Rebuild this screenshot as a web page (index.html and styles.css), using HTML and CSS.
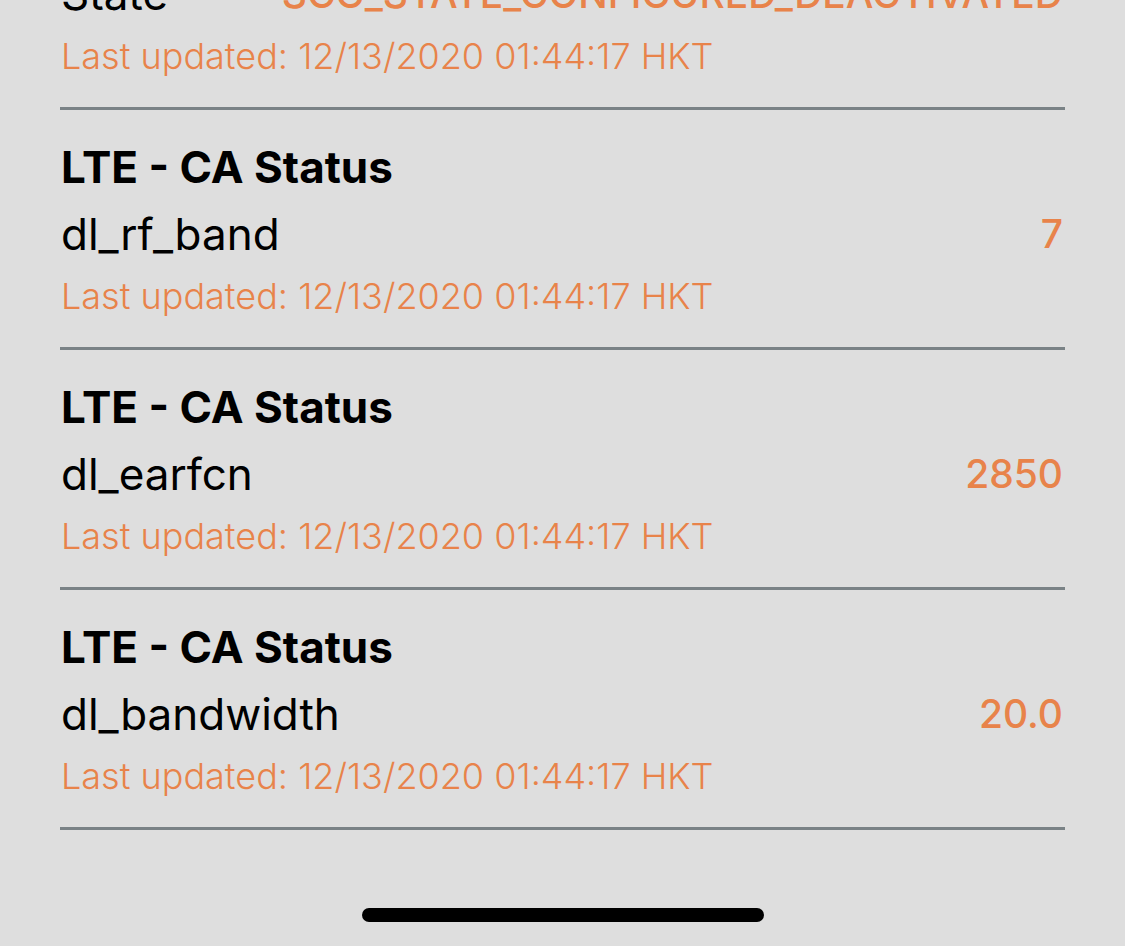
FILE: index.html
```html
<!DOCTYPE html>
<html>
<head>
	<title>Cell Status</title>
	<meta name="viewport" content="width=device-width, initial-scale=1.0">
	<link rel="stylesheet" href="styles.css">
</head>
<body>
	<div class="list">
		<div class="item">
			<div class="title">NR5G - SCG Status</div>
			<div class="row"><span class="key">State</span><span class="value">SCG_STATE_CONFIGURED_DEACTIVATED</span></div>
			<div class="updated">Last updated: 12/13/2020 01:44:17 HKT</div>
		</div>
		<div class="item">
			<div class="title">LTE - CA Status</div>
			<div class="row"><span class="key">dl_rf_band</span><span class="value">7</span></div>
			<div class="updated">Last updated: 12/13/2020 01:44:17 HKT</div>
		</div>
		<div class="item">
			<div class="title">LTE - CA Status</div>
			<div class="row"><span class="key">dl_earfcn</span><span class="value">2850</span></div>
			<div class="updated">Last updated: 12/13/2020 01:44:17 HKT</div>
		</div>
		<div class="item">
			<div class="title">LTE - CA Status</div>
			<div class="row"><span class="key">dl_bandwidth</span><span class="value">20.0</span></div>
			<div class="updated">Last updated: 12/13/2020 01:44:17 HKT</div>
		</div>
	</div>
	<div class="home-bar"></div>
</body>
</html>
```

FILE: styles.css
```css
body, html {
	margin: 0;
	height: 100%;
	overflow: hidden;
	font-family: Inter, "Noto Sans", sans-serif;
	background-color: #dedede;
	color: black;
}
.list {
	margin-top: -130px;
	padding: 0 60px;
}
.item {
	display: flex;
	flex-direction: column;
	padding: 27px 0 23px 1px;
	border-bottom: 3px solid #7a8286;
}
.title {
	font-size: 44px;
	font-weight: 700;
	line-height: 60px;
}
.row {
	display: flex;
	justify-content: space-between;
	margin-top: 7px;
	font-size: 44px;
	line-height: 60px;
}
.value {
	color: #e8834a;
	font-size: 39px;
	font-weight: 500;
	padding-right: 2px;
}
.updated {
	margin-top: 4px;
	font-size: 36px;
	font-weight: 300;
	line-height: 56px;
	color: #e8834a;
}
.home-bar {
	position: fixed;
	left: 362px;
	bottom: 24px;
	width: 402px;
	height: 14px;
	border-radius: 7px;
	background: black;
}
```
